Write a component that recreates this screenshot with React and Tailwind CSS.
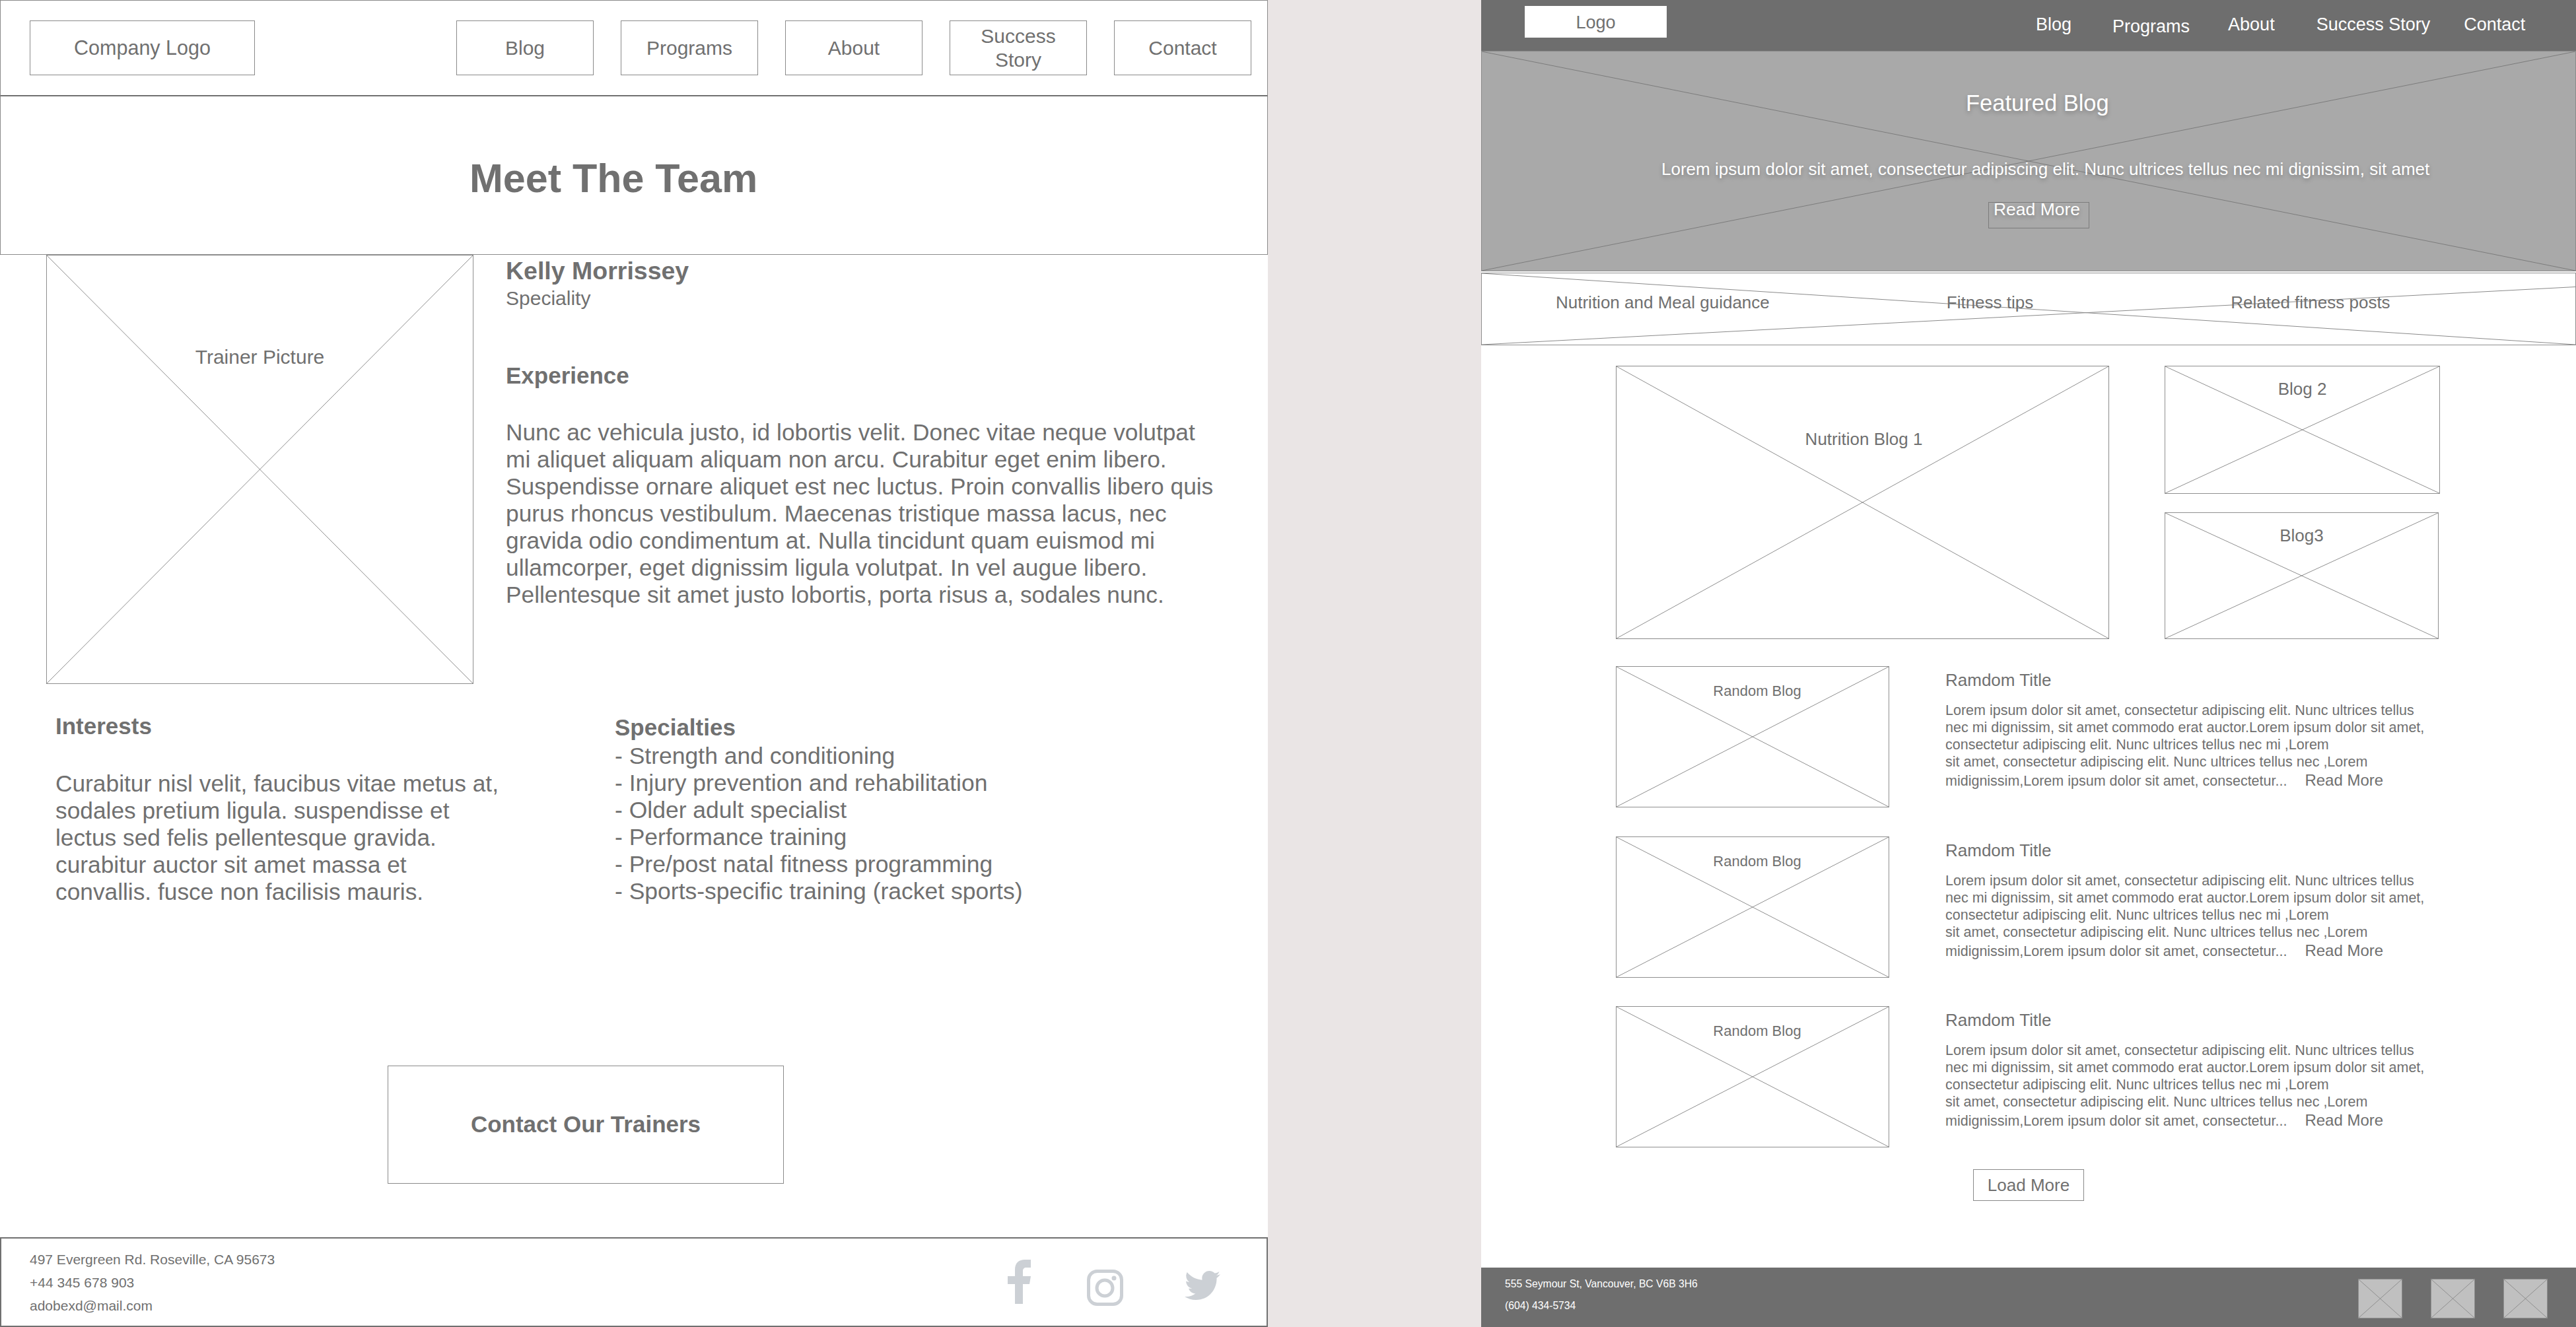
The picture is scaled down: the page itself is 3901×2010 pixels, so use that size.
import { FaTwitter } from "react-icons/fa";

const navItems = ["Blog", "Programs", "About", "Success Story", "Contact"];

const experience = [
  "Nunc ac vehicula justo, id lobortis velit. Donec vitae neque volutpat",
  "mi aliquet aliquam aliquam non arcu. Curabitur eget enim libero.",
  "Suspendisse ornare aliquet est nec luctus. Proin convallis libero quis",
  "purus rhoncus vestibulum. Maecenas tristique massa lacus, nec",
  "gravida odio condimentum at. Nulla tincidunt quam euismod mi",
  "ullamcorper, eget dignissim ligula volutpat. In vel augue libero.",
  "Pellentesque sit amet justo lobortis, porta risus a, sodales nunc.",
];

const interests = [
  "Curabitur nisl velit, faucibus vitae metus at,",
  "sodales pretium ligula. suspendisse et",
  "lectus sed felis pellentesque gravida.",
  "curabitur auctor sit amet massa et",
  "convallis. fusce non facilisis mauris.",
];

const specialties = [
  "- Strength and conditioning",
  "- Injury prevention and rehabilitation",
  "- Older adult specialist",
  "- Performance training",
  "- Pre/post natal fitness programming",
  "- Sports-specific training (racket sports)",
];

const blogLines = [
  "Lorem ipsum dolor sit amet, consectetur adipiscing elit. Nunc ultrices tellus",
  "nec mi dignissim, sit amet commodo erat auctor.Lorem ipsum dolor sit amet,",
  "consectetur adipiscing elit. Nunc ultrices tellus nec mi ,Lorem",
  "sit amet, consectetur adipiscing elit. Nunc ultrices tellus nec ,Lorem",
];

const Cross = ({ d = "M0 0L100 100M100 0L0 100", color = "#8f8f8f" }) => (
  <svg className="absolute inset-0 w-full h-full" viewBox="0 0 100 100" preserveAspectRatio="none">
    <path d={d} fill="none" stroke={color} strokeWidth="1" vectorEffect="non-scaling-stroke" />
  </svg>
);

const NavBox = ({ children }) => (
  <div className="w-[208px] h-[83px] border border-[#8a8a8a] flex items-center justify-center text-center text-[30px] leading-[36px]">
    {children}
  </div>
);

const LeftPage = () => (
  <div className="w-[1920px] h-[2010px] shrink-0 bg-white flex flex-col text-[#707070]">
    <header className="h-[146px] shrink-0 border border-[#8a8a8a] border-b-2 border-b-[#707070] flex items-center pl-[44px] pr-[24px]">
      <div className="w-[341px] h-[83px] border border-[#8a8a8a] flex items-center justify-center text-[30.5px]">
        Company Logo
      </div>
      <div className="ml-auto flex gap-[41px]">
        <NavBox>Blog</NavBox>
        <NavBox>Programs</NavBox>
        <NavBox>About</NavBox>
        <NavBox>
          Success
          <br />
          Story
        </NavBox>
        <NavBox>Contact</NavBox>
      </div>
    </header>

    <section className="h-[240px] shrink-0 border border-t-0 border-[#8a8a8a] flex items-center pl-[710px] pt-[10px]">
      <h1 className="text-[61px] font-bold leading-none">Meet The Team</h1>
    </section>

    <section className="flex pl-[70px] h-[651px] shrink-0">
      <div className="relative w-[647px] h-[650px] border border-[#8f8f8f] flex justify-center pt-[134px] text-[30px] leading-[40px]">
        <Cross />
        <span className="relative">Trainer Picture</span>
      </div>
      <div className="ml-[49px]">
        <h2 className="text-[37.5px] font-bold leading-[44px] mt-[2px]">Kelly Morrissey</h2>
        <p className="text-[30px] leading-[36px] mt-[2px]">Speciality</p>
        <h3 className="text-[35px] font-bold leading-[42px] mt-[78px]">Experience</h3>
        <div className="text-[35.3px] leading-[41px] mt-[44px] whitespace-nowrap">
          {experience.map((line) => (
            <div key={line}>{line}</div>
          ))}
        </div>
      </div>
    </section>

    <section className="flex h-[577px] shrink-0">
      <div className="w-[931px] pl-[84px]">
        <h3 className="text-[35px] font-bold leading-[42px] mt-[42px]">Interests</h3>
        <div className="text-[35.3px] leading-[41px] mt-[45px] whitespace-nowrap">
          {interests.map((line) => (
            <div key={line}>{line}</div>
          ))}
        </div>
      </div>
      <div>
        <h3 className="text-[35px] font-bold leading-[42px] mt-[44px]">Specialties</h3>
        <div className="text-[35.5px] leading-[41px] mt-[2px] whitespace-nowrap">
          {specialties.map((line) => (
            <div key={line}>{line}</div>
          ))}
        </div>
      </div>
    </section>

    <div className="h-[260px] shrink-0 pl-[587px]">
      <div className="w-[600px] h-[179px] border border-[#8a8a8a] flex items-center justify-center text-[35px] font-bold">
        Contact Our Trainers
      </div>
    </div>

    <footer className="flex-1 border-2 border-[#707070] flex items-center pl-[43px] pr-[67px]">
      <div className="text-[21px] leading-[35px]">
        <div>497 Evergreen Rd. Roseville, CA 95673</div>
        <div>+44 345 678 903</div>
        <div>adobexd@mail.com</div>
      </div>
      <div className="ml-auto flex items-start text-[#ccd0d5] pt-[2px]">
        <svg className="w-[35px] h-[67px]" viewBox="0 0 35 67" fill="currentColor">
          <path d="M11 67V37H0V25H11V15C11 5 17 0 26 0H35V12H28C25 12 23 14 23 17V25H35L33 37H23V67Z" />
        </svg>
        <svg className="w-[55px] h-[55px] ml-[85px] mt-[15px]" viewBox="0 0 55 55" fill="none" stroke="currentColor" strokeWidth="5">
          <rect x="2.5" y="2.5" width="50" height="50" rx="13" />
          <circle cx="27" cy="28" r="12" />
          <circle cx="41" cy="13" r="3.5" fill="currentColor" stroke="none" />
        </svg>
        <FaTwitter className="w-[60px] h-[54px] ml-[90px] mt-[12px]" />
      </div>
    </footer>
  </div>
);

const SmallBlog = ({ label, className }) => (
  <div className={`relative border border-[#8f8f8f] flex justify-center pt-[16px] text-[26px] leading-[36px] ${className}`}>
    <Cross />
    <span className="relative">{label}</span>
  </div>
);

const BlogRow = () => (
  <div className="flex h-[214px] shrink-0">
    <div className="relative w-[414px] h-[214px] border border-[#8f8f8f] flex justify-center pt-[23px] text-[22px] leading-[28px]">
      <Cross />
      <span className="relative pl-[14px]">Random Blog</span>
    </div>
    <div className="ml-[85px]">
      <h4 className="text-[26px] leading-[32px] mt-[5px]">Ramdom Title</h4>
      <div className="text-[21.5px] leading-[26px] mt-[17px] whitespace-nowrap">
        {blogLines.map((line) => (
          <div key={line}>{line}</div>
        ))}
        <div className="mt-[2px]">
          midignissim,Lorem ipsum dolor sit amet, consectetur...
          <span className="text-[24px] ml-[27px]">Read More</span>
        </div>
      </div>
    </div>
  </div>
);

const RightPage = () => (
  <div className="w-[1658px] h-[2010px] shrink-0 bg-white flex flex-col text-[#707070]">
    <header className="h-[77px] shrink-0 bg-[#6e6e6e] flex items-start pl-[66px] text-white text-[27px]">
      <div className="w-[215px] h-[48px] mt-[9px] pt-[2px] bg-white text-[#707070] flex items-center justify-center">Logo</div>
      <nav className="flex ml-[559px] mt-[17px]">
        <a>{navItems[0]}</a>
        <a className="ml-[62px] mt-[3px]">{navItems[1]}</a>
        <a className="ml-[58px]">{navItems[2]}</a>
        <a className="ml-[63px]">{navItems[3]}</a>
        <a className="ml-[51px]">{navItems[4]}</a>
      </nav>
    </header>

    <section className="relative h-[334px] shrink-0 bg-[#a9a9a9] border border-[#8a8a8a] flex flex-col text-white [text-shadow:0_3px_6px_rgba(0,0,0,0.25)]">
      <Cross color="#7c7c7c" />
      <h2 className="relative text-[34.5px] leading-[40px] mt-[58px] pl-[733px]">Featured Blog</h2>
      <p className="relative text-[26px] leading-[32px] mt-[64px] pl-[272px] whitespace-nowrap">
        Lorem ipsum dolor sit amet, consectetur adipiscing elit. Nunc ultrices tellus nec mi dignissim, sit amet
      </p>
      <div className="relative w-[153px] h-[40px] ml-[767px] mt-[34px] border border-[#7c7c7c] text-[26.5px] leading-[24px] text-center pr-[6px]">
        <span className="relative -top-[2px]">Read More</span>
      </div>
    </section>

    <section className="relative h-[110px] mt-[2px] shrink-0 border border-[#8f8f8f] flex items-center text-[26px] pb-[20px]">
      <Cross d="M0 0L100 100M0 100L100 19" color="#8a8a8a" />
      <span className="relative ml-[112px]">Nutrition and Meal guidance</span>
      <span className="relative ml-[268px]">Fitness tips</span>
      <span className="relative ml-[299px]">Related fitness posts</span>
    </section>

    <section className="flex h-[486px] shrink-0 pl-[204px] pt-[31px]">
      <div className="relative w-[747px] h-[414px] border border-[#8a8a8a] flex justify-center pt-[92px] text-[26px] leading-[36px]">
        <Cross />
        <span className="relative pl-[4px]">Nutrition Blog 1</span>
      </div>
      <div className="ml-[84px] flex flex-col gap-[28px]">
        <SmallBlog label="Blog 2" className="w-[417px] h-[194px]" />
        <SmallBlog label="Blog3" className="w-[415px] h-[192px]" />
      </div>
    </section>

    <section className="flex flex-col gap-[43.5px] pl-[204px]">
      <BlogRow />
      <BlogRow />
      <BlogRow />
    </section>

    <div className="pl-[745px] mt-[33px] shrink-0">
      <div className="w-[168px] h-[48px] border border-[#8a8a8a] flex items-center justify-center text-[26px]">
        Load More
      </div>
    </div>

    <footer className="mt-auto h-[90px] shrink-0 bg-[#6e6e6e] flex items-center pl-[36px] text-white">
      <div className="text-[15.7px] leading-[33px] -mt-[8px]">
        <div>555 Seymour St, Vancouver, BC V6B 3H6</div>
        <div>(604) 434-5734</div>
      </div>
      <div className="ml-auto flex gap-[43px] pr-[43px] mt-[4px]">
        {[0, 1, 2].map((i) => (
          <div key={i} className="relative w-[67px] h-[60px] bg-[#c0c0c0] border border-[#8f8f8f]">
            <Cross color="#8f8f8f" />
          </div>
        ))}
      </div>
    </footer>
  </div>
);

export default function App() {
  return (
    <div className="w-[3901px] h-[2010px] flex overflow-hidden bg-[#eae5e5] font-['Liberation_Sans',Arial,sans-serif]">
      <LeftPage />
      <div className="w-[323px] shrink-0" />
      <RightPage />
    </div>
  );
}
